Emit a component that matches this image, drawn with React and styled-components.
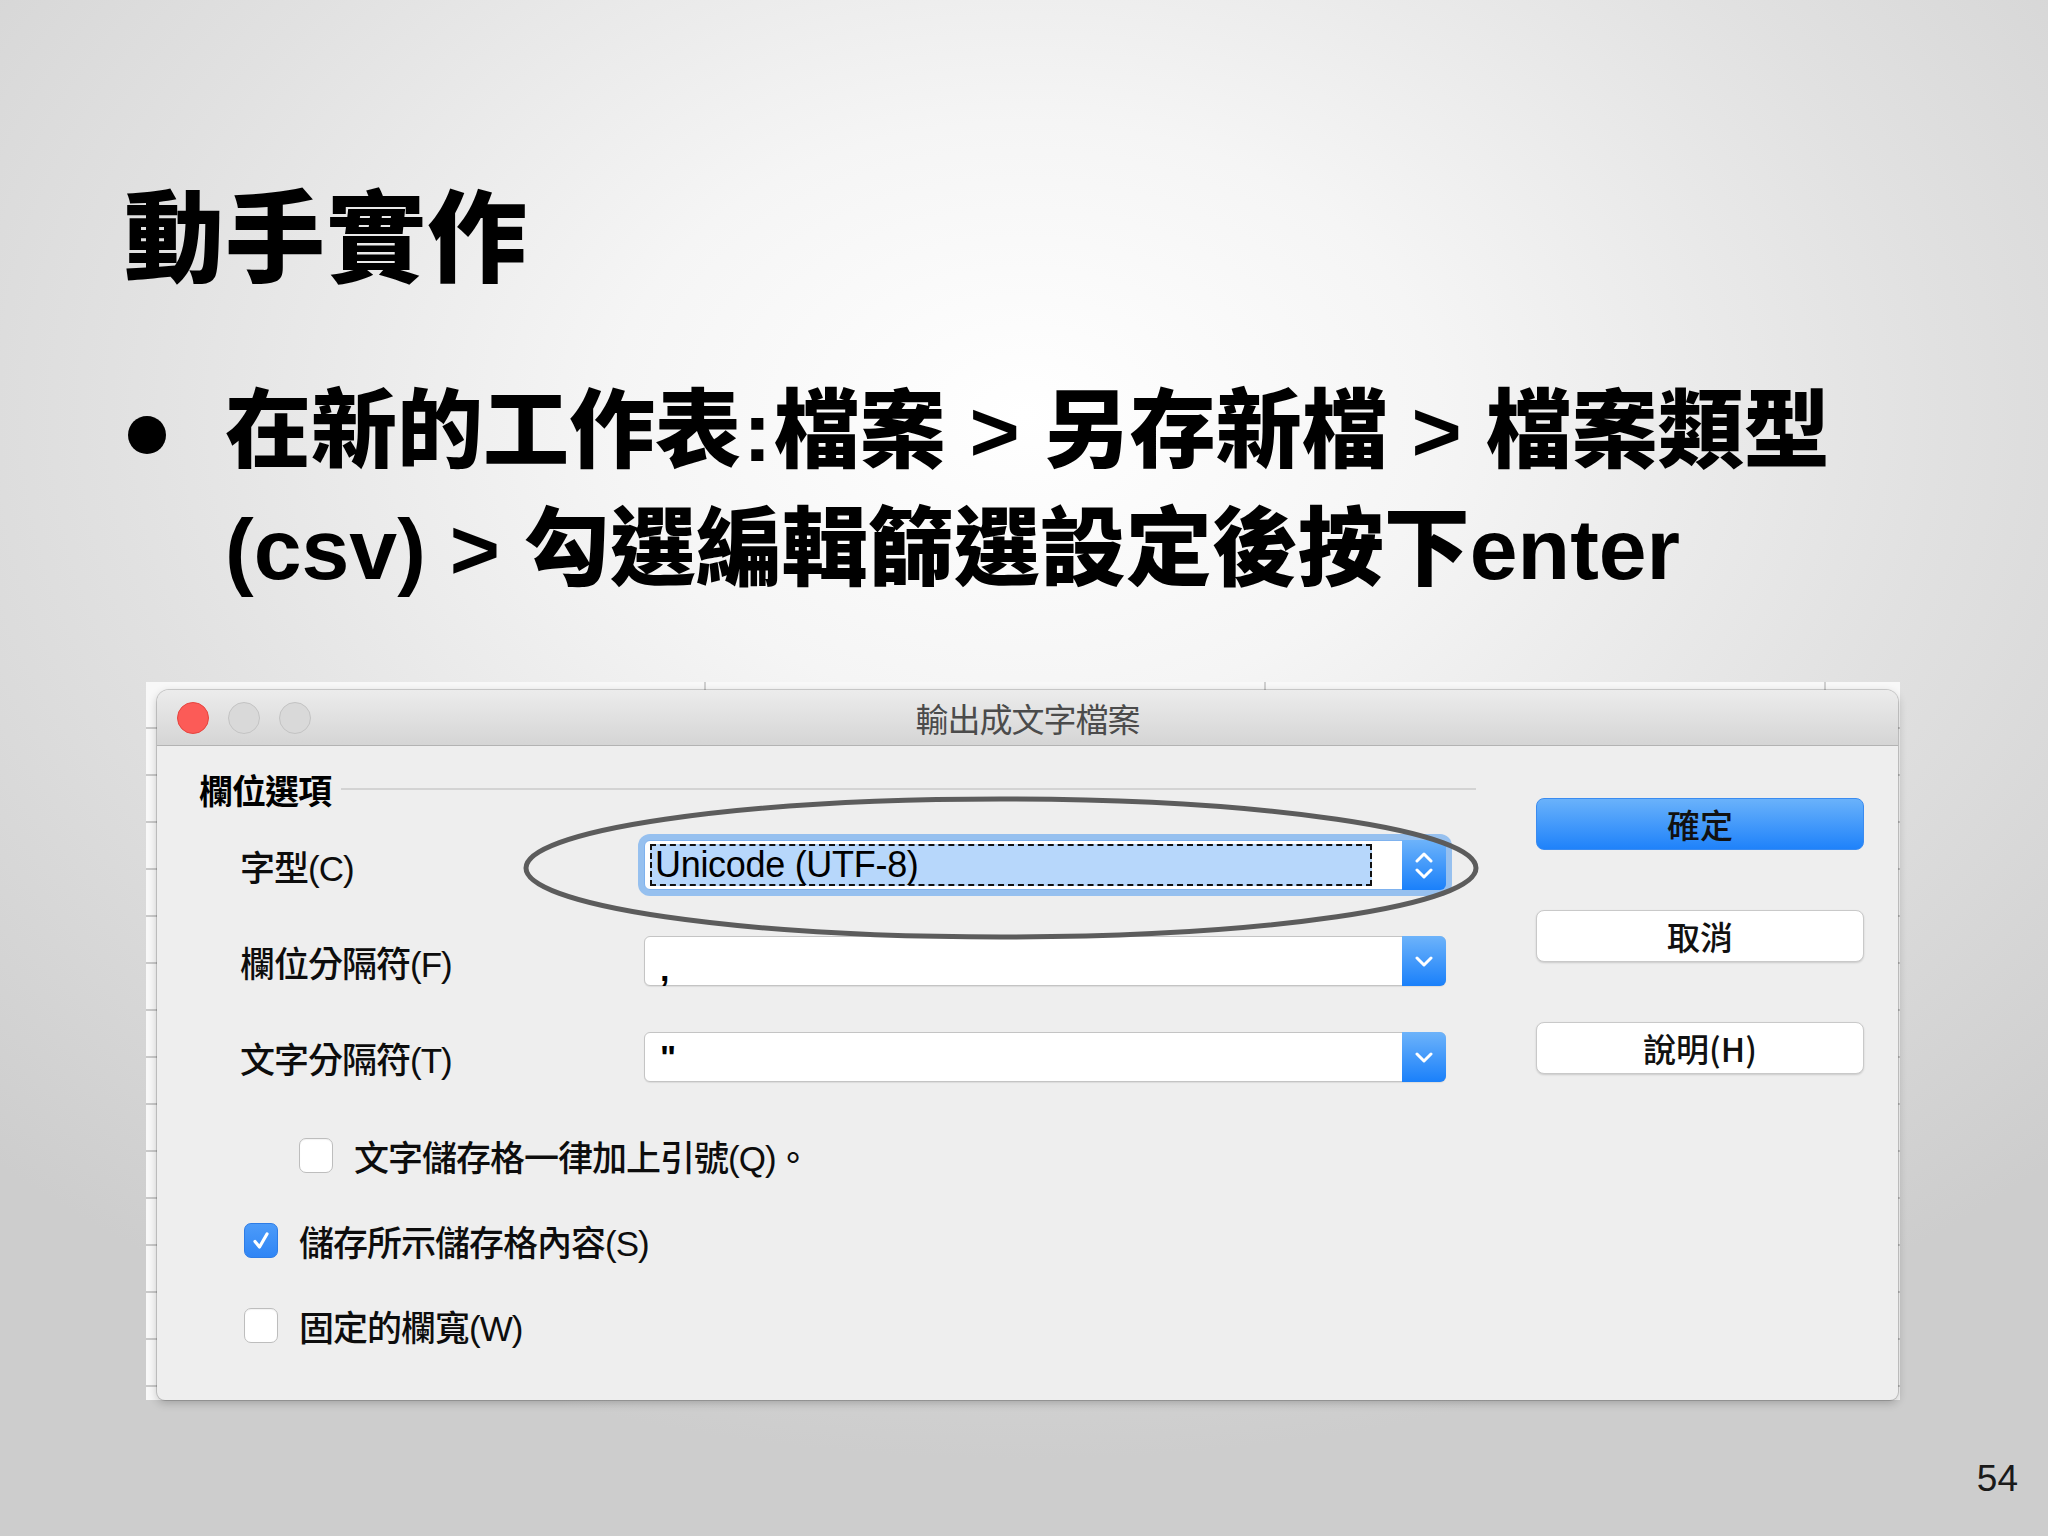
import React from 'react'
import styled, { createGlobalStyle, css } from 'styled-components'

const SANS = `"Liberation Sans", "Noto Sans CJK TC", sans-serif`
const CJK = `"Noto Sans CJK TC", "Liberation Sans", sans-serif`

const GlobalStyle = createGlobalStyle`
  html, body {
    margin: 0;
    padding: 0;
    background: #d0d0d0;
  }
  * {
    box-sizing: border-box;
  }
`

const Slide = styled.div`
  width: 2048px;
  height: 1536px;
  display: flex;
  flex-direction: column;
  padding-left: 124px;
  overflow: hidden;
  background: radial-gradient(
    ellipse 72% 68% at 50% 27%,
    #ffffff 0%,
    #f5f5f5 28%,
    #e1e1e1 62%,
    #cdcdcd 100%
  );
  font-family: ${SANS};
  color: #000;
`

const Title = styled.h1`
  margin: 181px 0 0;
  font-family: ${CJK};
  font-size: 100px;
  line-height: 100px;
  font-weight: 900;
  letter-spacing: 1px;
`

const Bullets = styled.ul`
  list-style: none;
  margin: 91px 0 0 4px;
  padding: 0;
`

const BulletItem = styled.li`
  display: flex;
  gap: 59px;
  align-items: flex-start;
`

const Dot = styled.span`
  flex: none;
  width: 38px;
  height: 38px;
  margin-top: 44px;
  border-radius: 50%;
  background: #000;
`

const BulletText = styled.span`
  font-size: 86px;
  line-height: 118px;
  font-weight: 900;
`

const Colon = styled.span`
  margin: 0 2px;
`

const Sheet = styled.div`
  width: 1754px;
  height: 718px;
  margin: 74px 0 0 22px;
  padding: 8px 0 0 11px;
  background-color: #f8f8f8;
  background-image: repeating-linear-gradient(
      to bottom,
      transparent 0 45px,
      #c9c9c9 45px 47px
    ),
    repeating-linear-gradient(
      to right,
      transparent 0 558px,
      #cfcfcf 558px 560px
    );
`

const Dialog = styled.div`
  position: relative;
  width: 1741px;
  height: 710px;
  display: flex;
  flex-direction: column;
  background: #eeeeee;
  border-radius: 12px 12px 8px 8px;
  box-shadow: 0 0 0 1px rgba(0, 0, 0, 0.16), 0 3px 10px rgba(0, 0, 0, 0.22);
  overflow: hidden;
`

const TitleBar = styled.div`
  flex: none;
  height: 56px;
  display: grid;
  grid-template-columns: 1fr auto 1fr;
  align-items: center;
  padding: 0 20px;
  background: linear-gradient(#ececec, #d5d5d5);
  border-bottom: 1px solid #b3b3b3;
`

const Lights = styled.div`
  display: flex;
  gap: 19px;
`

const Light = styled.span`
  width: 32px;
  height: 32px;
  border-radius: 50%;
  ${({ $close }) =>
    $close
      ? css`
          background: #fc5b57;
          border: 1px solid #e5453f;
        `
      : css`
          background: #d9d9d9;
          border: 1px solid #c3c3c3;
        `}
`

const WindowTitle = styled.div`
  font-family: ${CJK};
  font-size: 33px;
  color: #4b4b4b;
  letter-spacing: -1px;
`

const Body = styled.div`
  flex: 1;
  display: grid;
  grid-template-columns: 1277px 328px;
  column-gap: 60px;
  padding: 0 34px 0 42px;
`

const Fields = styled.div`
  display: flex;
  flex-direction: column;
  padding-top: 21px;
`

const SectionHeader = styled.div`
  height: 44px;
  display: flex;
  align-items: center;
  gap: 10px;
  margin-bottom: 6px;
`

const SectionLabel = styled.span`
  font-family: ${CJK};
  font-size: 34px;
  font-weight: 700;
  letter-spacing: -1px;
`

const Rule = styled.span`
  flex: 1;
  height: 2px;
  background: #d3d3d3;
`

const FieldRow = styled.div`
  height: 96px;
  display: grid;
  grid-template-columns: 404px 802px;
  align-items: center;
  padding-left: 41px;
`

const FieldLabel = styled.span`
  font-size: 35px;
  font-weight: 500;
  letter-spacing: -1px;
  color: #0d0d0d;
`

const Select = styled.div`
  height: 50px;
  display: flex;
  background: #fff;
  border: 1px solid #c4c4c4;
  border-radius: 6px;
  box-shadow: 0 1px 1px rgba(0, 0, 0, 0.08);
  ${({ $focused }) =>
    $focused &&
    css`
      border-color: #7fb2ee;
      box-shadow: 0 0 0 6px rgba(112, 172, 240, 0.7);
    `}
`

const SelectValue = styled.div`
  flex: 1;
  display: flex;
  align-items: center;
  padding: 3px 30px 3px 5px;
  font-size: 34px;
  font-weight: 700;
`

const PlainValue = styled.span`
  padding-left: 10px;
  line-height: 1;
  ${({ $low }) =>
    $low &&
    css`
      padding-top: 16px;
    `}
`

const Highlight = styled.span`
  flex: 1;
  height: 100%;
  display: flex;
  align-items: center;
  padding-left: 3px;
  background: #b7d7fb;
  border: 2px dashed #111;
  font-size: 36px;
  font-weight: 400;
  letter-spacing: -0.3px;
`

const SelectButton = styled.span`
  flex: none;
  width: 44px;
  display: flex;
  flex-direction: column;
  align-items: center;
  justify-content: center;
  gap: 5px;
  margin: -1px -1px -1px 0;
  border-radius: 0 6px 6px 0;
  background: linear-gradient(#6db3fa, #1a80fa);
`

const CheckRow = styled.label`
  height: 85px;
  display: flex;
  align-items: center;
  gap: 21px;
  padding-left: ${({ $indent }) => $indent}px;
  &:first-of-type {
    margin-top: 8px;
  }
`

const Box = styled.span`
  flex: none;
  width: 34px;
  height: 35px;
  display: flex;
  align-items: center;
  justify-content: center;
  border-radius: 7px;
  ${({ $checked }) =>
    $checked
      ? css`
          background: linear-gradient(#4c9bf9, #2f85f5);
          border: 1px solid #2d7ce6;
        `
      : css`
          background: #fff;
          border: 1.5px solid #bdbdbd;
          box-shadow: inset 0 1px 1px rgba(0, 0, 0, 0.05);
        `}
`

const CheckLabel = styled.span`
  font-size: 35px;
  font-weight: 500;
  letter-spacing: -1px;
  color: #0d0d0d;
`

const Buttons = styled.div`
  display: flex;
  flex-direction: column;
  gap: 60px;
  padding-top: 52px;
`

const Button = styled.button`
  height: 52px;
  width: 100%;
  border-radius: 8px;
  font-family: ${CJK};
  font-size: 33px;
  font-weight: 500;
  color: #111;
  line-height: 1;
  ${({ $primary }) =>
    $primary
      ? css`
          background: linear-gradient(#6ab2fb, #1f82fa);
          border: 1px solid #3a8bf0;
        `
      : css`
          background: #fff;
          border: 1px solid #c9c9c9;
          box-shadow: 0 1px 2px rgba(0, 0, 0, 0.15);
        `}
`

const Annotation = styled.svg`
  position: absolute;
  left: 364px;
  top: 104px;
  width: 960px;
  height: 148px;
  pointer-events: none;
`

const PageNumber = styled.div`
  margin-top: auto;
  align-self: flex-end;
  padding: 0 30px 39px 0;
  font-size: 37px;
  line-height: 37px;
  color: #1a1a1a;
`

const ChevronDown = () => (
  <svg width="18" height="11" viewBox="0 0 18 11">
    <path d="M2 2 L9 9 L16 2" fill="none" stroke="#fff" strokeWidth="3" strokeLinecap="round" strokeLinejoin="round" />
  </svg>
)

const ChevronUp = () => (
  <svg width="18" height="11" viewBox="0 0 18 11">
    <path d="M2 9 L9 2 L16 9" fill="none" stroke="#fff" strokeWidth="3" strokeLinecap="round" strokeLinejoin="round" />
  </svg>
)

const Check = () => (
  <svg width="22" height="22" viewBox="0 0 22 22">
    <path d="M5 11.5 L9.5 17 L17 4" fill="none" stroke="#fff" strokeWidth="3.2" strokeLinecap="round" strokeLinejoin="round" />
  </svg>
)

const checkOptions = [
  { label: '文字儲存格一律加上引號(Q)。', indent: 100, checked: false },
  { label: '儲存所示儲存格內容(S)', indent: 45, checked: true },
  { label: '固定的欄寬(W)', indent: 45, checked: false },
]

export default function App() {
  return (
    <>
      <GlobalStyle />
      <Slide>
        <Title>動手實作</Title>

        <Bullets>
          <BulletItem>
            <Dot />
            <BulletText>
              在新的工作表<Colon>:</Colon>檔案 &gt; 另存新檔 &gt; 檔案類型
              <br />
              (csv) &gt; 勾選編輯篩選設定後按下enter
            </BulletText>
          </BulletItem>
        </Bullets>

        <Sheet>
          <Dialog>
            <TitleBar>
              <Lights>
                <Light $close />
                <Light />
                <Light />
              </Lights>
              <WindowTitle>輸出成文字檔案</WindowTitle>
              <span />
            </TitleBar>

            <Body>
              <Fields>
                <SectionHeader>
                  <SectionLabel>欄位選項</SectionLabel>
                  <Rule />
                </SectionHeader>

                <FieldRow>
                  <FieldLabel>字型(C)</FieldLabel>
                  <Select $focused>
                    <SelectValue>
                      <Highlight>Unicode (UTF-8)</Highlight>
                    </SelectValue>
                    <SelectButton>
                      <ChevronUp />
                      <ChevronDown />
                    </SelectButton>
                  </Select>
                </FieldRow>

                <FieldRow>
                  <FieldLabel>欄位分隔符(F)</FieldLabel>
                  <Select>
                    <SelectValue>
                      <PlainValue $low>,</PlainValue>
                    </SelectValue>
                    <SelectButton>
                      <ChevronDown />
                    </SelectButton>
                  </Select>
                </FieldRow>

                <FieldRow>
                  <FieldLabel>文字分隔符(T)</FieldLabel>
                  <Select>
                    <SelectValue>
                      <PlainValue>"</PlainValue>
                    </SelectValue>
                    <SelectButton>
                      <ChevronDown />
                    </SelectButton>
                  </Select>
                </FieldRow>

                {checkOptions.map((opt) => (
                  <CheckRow key={opt.label} $indent={opt.indent}>
                    <Box $checked={opt.checked}>{opt.checked && <Check />}</Box>
                    <CheckLabel>{opt.label}</CheckLabel>
                  </CheckRow>
                ))}
              </Fields>

              <Buttons>
                <Button $primary>確定</Button>
                <Button>取消</Button>
                <Button>說明(H)</Button>
              </Buttons>
            </Body>

            <Annotation viewBox="0 0 960 148">
              <ellipse cx="480" cy="74" rx="475" ry="69" fill="none" stroke="#5c5c5c" strokeWidth="5" />
            </Annotation>
          </Dialog>
        </Sheet>

        <PageNumber>54</PageNumber>
      </Slide>
    </>
  )
}
